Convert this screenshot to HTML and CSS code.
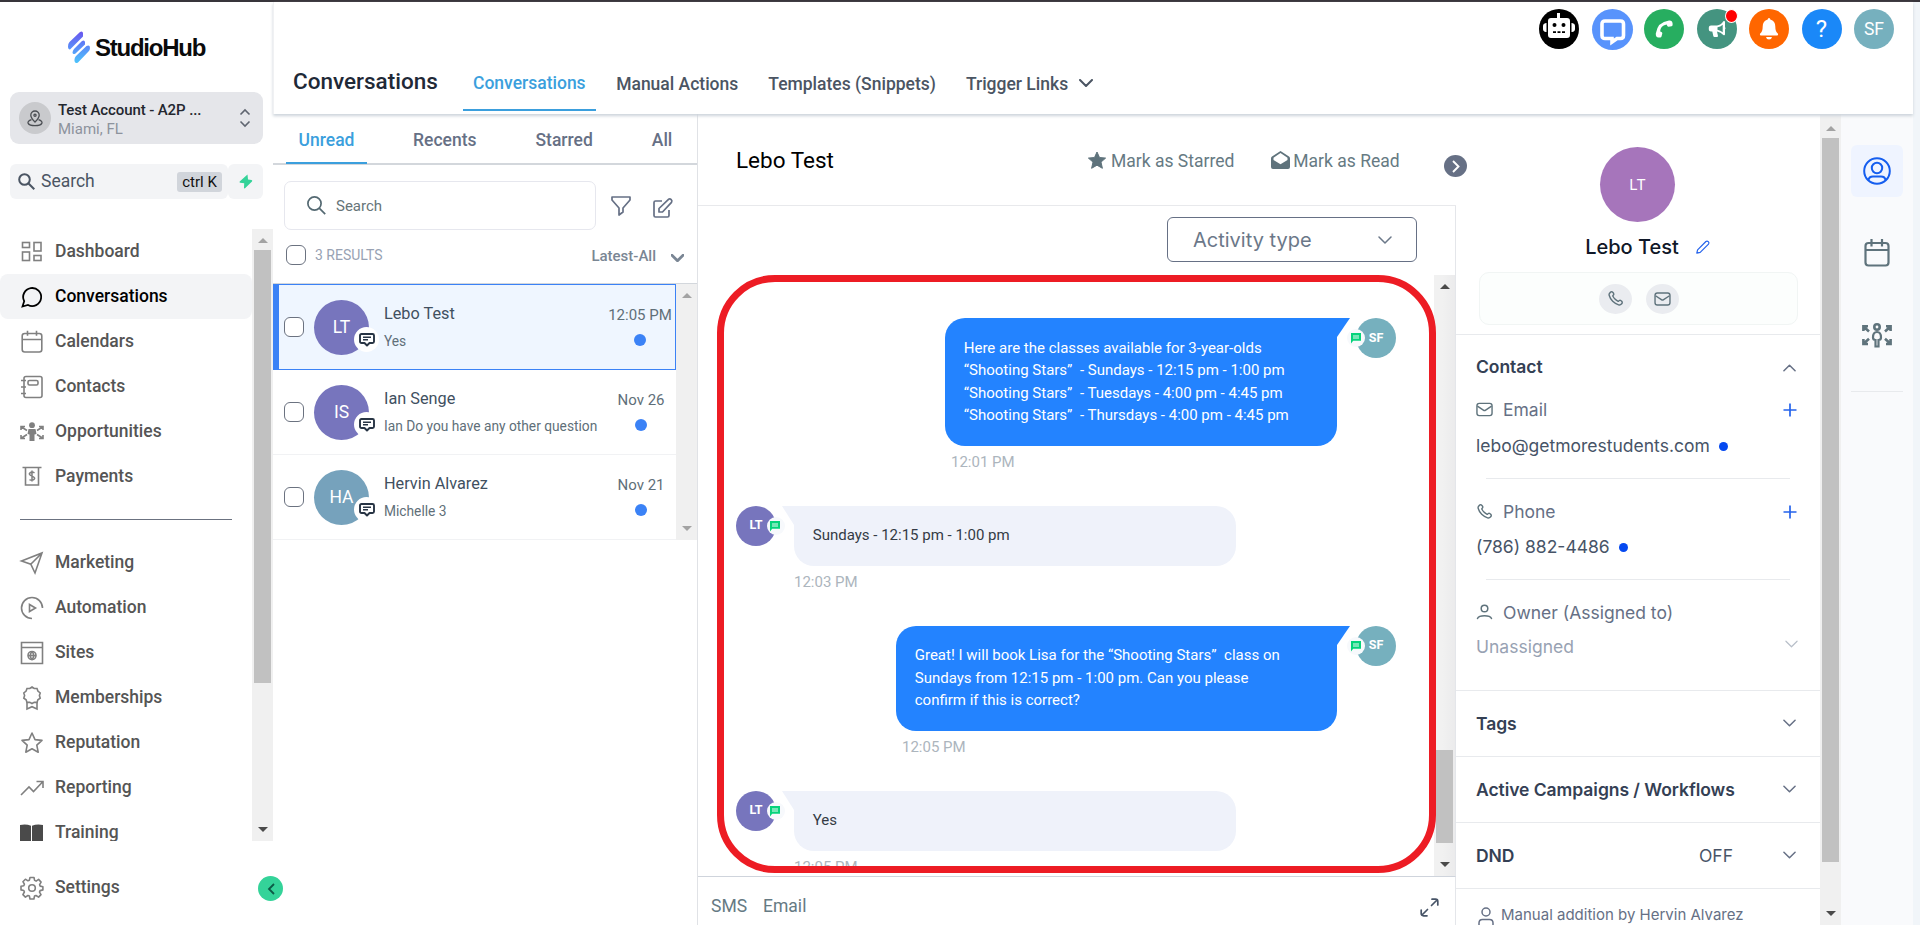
FILE: index.html
```html
<!DOCTYPE html>
<html lang="en">
<head>
<meta charset="utf-8">
<title>StudioHub - Conversations</title>
<link rel="stylesheet" href="styles.css">
</head>
<body>
<svg class="defs" width="0" height="0">
  <symbol id="chev-down" viewBox="0 0 14 8"><path d="M1 1l6 6 6-6" fill="none" stroke="currentColor" stroke-linecap="round" stroke-linejoin="round"/></symbol>
  <symbol id="mail" viewBox="0 0 18 15"><rect x="1" y="1" width="16" height="13" rx="2.5" fill="none" stroke="currentColor" stroke-width="1.5"/><path d="M1.5 4l6.3 4.2q1.2.8 2.4 0L16.500 4" fill="none" stroke="currentColor" stroke-width="1.500"/></symbol>
  <symbol id="phone" viewBox="0 0 24 24"><path d="M8.380 8.853a14.600 14.600 0 0 0 2.847 4.010 14.600 14.600 0 0 0 4.010 2.847c.124.060.187.090.265.112.280.082.625.023.862-.147.067-.048.124-.105.239-.219.350-.350.524-.524.700-.639a2 2 0 0 1 2.180 0c.176.115.351.290.700.640l.196.194c.532.531.797.797.942 1.082a2 2 0 0 1 0 1.806c-.145.285-.410.551-.942 1.082l-.157.158c-.530.530-.795.794-1.155.997-.400.224-1.020.386-1.478.384-.413-.001-.695-.081-1.260-.241a19.038 19.038 0 0 1-8.283-4.874A19.039 19.039 0 0 1 3.170 7.761c-.160-.564-.240-.846-.241-1.260a3.377 3.377 0 0 1 .384-1.477c.202-.360.467-.625.997-1.155l.157-.158c.532-.531.798-.797 1.083-.941a2 2 0 0 1 1.805 0c.286.144.551.410 1.083.942l.195.194c.350.350.524.525.638.700a2 2 0 0 1 0 2.181c-.114.176-.289.350-.638.700-.115.114-.172.172-.220.238-.170.238-.228.582-.147.862.023.078.053.140.113.266z" fill="none" stroke="currentColor" stroke-width="2"/></symbol>
  <symbol id="user" viewBox="0 0 16 16"><circle cx="8" cy="4.500" r="3.300" fill="none" stroke="currentColor" stroke-width="1.500"/><path d="M1 14.500c1.600-3.700 12.400-3.700 14 0" fill="none" stroke="currentColor" stroke-width="1.500" stroke-linecap="round"/></symbol>
  <symbol id="calendar" viewBox="0 0 22 24"><rect x="1.200" y="3.500" width="19.600" height="18.500" rx="2.500" fill="none" stroke="currentColor" stroke-width="1.600"/><path d="M1.200 9.500h19.600M6.500.800v5M15.500.800v5" fill="none" stroke="currentColor" stroke-width="1.600"/></symbol>
  <symbol id="comment" viewBox="0 0 16 14"><path d="M2.500 1h11Q15 1 15 2.500v6q0 1.500-1.500 1.500H10.500L8 12.500 5.500 10h-3Q1 10 1 8.500v-6Q1 1 2.500 1z" fill="#fff" stroke="#273444" stroke-width="1.900" stroke-linejoin="round"/><path d="M4 4.200h8M4 6.800h5" stroke="#273444" stroke-width="1.400"/></symbol>
  <symbol id="sms" viewBox="0 0 12 12"><path d="M1 1h10v7.800H3.200L1 11.400z" fill="#06d37c"/><path d="M3 4h6M3 6h6" stroke="#fff" stroke-width=".900"/></symbol>
  <symbol id="plus" viewBox="0 0 14 14"><path d="M7 .500v13M.500 7h13" stroke="currentColor" stroke-width="1.700"/></symbol>
</svg>
<div class="window-edge"></div>
<div class="app">
  <aside class="sidebar">
    <div class="logo">
      <svg width="24" height="33" viewBox="0 0 24 33"><defs><linearGradient id="lg" x1="0" y1="0" x2="0" y2="1" gradientUnits="objectBoundingBox"><stop offset="0" stop-color="#6a55ee"/><stop offset=".5" stop-color="#5a8cf8"/><stop offset="1" stop-color="#4cc4fb"/></linearGradient></defs>
      <path d="M1 15.500Q.800 13 2.500 11L13 1Q15.500-.500 16 2v3.500L3 18.500Q1 18.500 1 15.500zM5.500 21.500q.200-2 1.500-3.500L15 10q2.500-1.500 3 1v2.500L8.500 22.500Q5.800 24 5.500 21.500zM7.500 28.500q0-2 1.500-3.500L19.500 15q3.500-1.500 3.500 2 0 2-1.500 3.500L11 31.500Q8 33 7.500 30z" fill="url(#lg)"/></svg>
      <span>StudioHub</span>
    </div>
    <div class="account">
      <div class="pin"><svg width="16" height="17" viewBox="0 0 16 17" fill="none" stroke="#4a4d52" stroke-width="1.300"><path d="M8 12C5 9 3.800 7.300 3.800 5.200a4.200 4.200 0 0 1 8.400 0C12.200 7.300 11 9 8 12z"/><circle cx="8" cy="5.200" r="1.100"/><path d="M4.500 9.700C-1.500 11.500.500 15.600 8 15.600s9.500-4.100 3.500-5.900"/></svg></div>
      <div class="account-text"><b>Test Account - A2P ...</b><span>Miami, FL</span></div>
      <svg width="12" height="18" viewBox="0 0 12 18" fill="none" stroke="#5f6570" stroke-width="1.600"><path d="M1.500 5.500L6 1l4.500 4.500M1.500 12.500L6 17l4.500-4.500"/></svg>
    </div>
    <div class="side-search">
      <div class="side-input"><svg width="17" height="17" viewBox="0 0 17 17" fill="none" stroke="#4b5563" stroke-width="2"><circle cx="6.500" cy="6.500" r="5.300"/><path d="M10.300 10.300l6 6"/></svg><span>Search</span><kbd>ctrl K</kbd></div>
      <div class="bolt"><svg width="14" height="15" viewBox="0 0 14 15"><path d="M8.500.500L.700 7.500q-.700 1 .500 1.300l4 .400L5 14q.300.800 1 .300L13 7.500q.700-1-.500-1.400L9 5.600z" fill="#34d399"/></svg></div>
    </div>
    <div class="nav-wrap">
      <nav class="nav">
        <a><svg width="22" height="22" viewBox="0 0 22 22"><rect x="1.500" y="1.500" width="7" height="5"/><rect x="13" y="1.500" width="7" height="8.500"/><rect x="1.500" y="11" width="7" height="8.500"/><rect x="13" y="14.500" width="7" height="5"/></svg>Dashboard</a>
        <a class="on"><svg width="22" height="22" viewBox="0 0 22 22"><path d="M1.500 20.500l1.700-5.300A9 9 0 1 1 7 19z" stroke-width="1.800"/></svg>Conversations</a>
        <a><svg width="22" height="24"><use href="#calendar"/></svg>Calendars</a>
        <a><svg width="24" height="24" viewBox="0 0 24 24"><rect x="4" y="1.500" width="18" height="21" rx="2"/><rect x="8" y="5.500" width="10" height="4.500" rx="1.500"/><path d="M1 5.500h5M1 12h5M1 18.500h5"/></svg>Contacts</a>
        <a><svg width="24" height="20" viewBox="0 0 24 20"><circle cx="12" cy="3.200" r="2.900" fill="#808080" stroke="none"/><path d="M8.500 7h7l1 5-2 .500V19h-5v-6.500l-2-.500z" fill="#808080" stroke="none"/><path d="M7 8.500L1.500 5M1 8V4.500h4M17 8.500L22.500 5M19 4.500h4V8M7 12.500L1.500 16M1 13v3.500h4M17 12.500l5.500 3.500M19 16.500h4V13"/></svg>Opportunities</a>
        <a><svg width="20" height="21" viewBox="0 0 20 21"><path d="M.500 1.500h19M3.500 1.500v17.500h13V1.500"/><path d="M12.500 6.800q-2.500-1.600-4.500 0t2 3.300 2 3.300-4.500.2M10 4.500v11" stroke-width="1.500"/></svg>Payments</a>
        <hr>
        <a><svg width="24" height="24" viewBox="0 0 24 24"><path d="M1.500 10L22 2l-7 20-4.200-8.800zM11 13L22 2"/></svg>Marketing</a>
        <a><svg width="24" height="24" viewBox="0 0 24 24"><path d="M12 22.500A10.500 10.500 0 1 1 22.500 12"/><path d="M9.500 8.500v7l6-3.500z"/></svg>Automation</a>
        <a><svg width="24" height="24" viewBox="0 0 24 24"><path d="M1.500 1.500h21v21h-21zM1.500 6.500h21"/><circle cx="12" cy="14.500" r="4"/><path d="M8 14.500h8M12 10.500q-3.500 4 0 8 3.500-4 0-8"/></svg>Sites</a>
        <a><svg width="24" height="24" viewBox="0 0 24 24"><path d="M12 1l2.200 1.500 2.800 0 .9 2.600L20.200 7l-.8 2.600.8 2.600-2.300 1.600-.9 2.600-2.800 0L12 17.500l-2.200-1.100-2.800 0-.9-2.600L3.800 12.200l.8-2.600L3.800 7l2.300-1.900L7 2.500l2.800 0z"/><path d="M7 16v7l5-2.300 5 2.300v-7"/></svg>Memberships</a>
        <a><svg width="24" height="24" viewBox="0 0 24 24"><path d="M12 2l3 6.600 7 .8-5.200 4.800 1.400 7L12 17.800 5.800 21.200l1.400-7L2 9.400l7-.8z" stroke-linejoin="round"/></svg>Reputation</a>
        <a><svg width="24" height="16" viewBox="0 0 24 16"><path d="M1 15l8-8 4.500 4.500L22.500 2M16.500 1.500h6.500v6.500"/></svg>Reporting</a>
        <a><svg width="24" height="20" viewBox="0 0 24 20"><path d="M0 2q6-1.500 11 .8v17Q6 17 0 18.500zM23 2q-6-1.500-11 .8v17q5-2.800 11-1.300z" fill="#4a4a4a" stroke="none"/></svg>Training</a>
      </nav>
      <div class="sbar sbar-nav"><i class="up dim"></i><i class="thumb"></i><i class="down"></i></div>
    </div>
    <div class="settings"><svg width="24" height="24" viewBox="0 0 24 24"><path d="M10 1.500h4l.6 2.900 1.500.7L18.600 3.400l2.500 2.700-1.500 2.500.6 1.500 2.700.6v3.200l-2.800.7-.6 1.500 1.500 2.500-2.400 2.500-2.600-1.600-1.500.6-.6 2.900h-3.900l-.6-2.900-1.500-.6-2.500 1.600L2.900 18.600 4.400 16l-.6-1.500L1 13.900v-3.600l2.800-.6.6-1.500L2.900 5.700l2.500-2.500 2.500 1.600 1.500-.6z" stroke-linejoin="round"/><circle cx="12" cy="12" r="3.300"/></svg>Settings</div>
    <div class="collapse"><svg width="8" height="12" viewBox="0 0 8 12"><path d="M7 1L2 6l5 5" fill="none" stroke="#0c5a46" stroke-width="1.800"/></svg></div>
  </aside>

  <main class="main">
    <header class="header">
      <h1>Conversations</h1>
      <div class="tabs">
        <a class="on">Conversations</a><a>Manual Actions</a><a>Templates (Snippets)</a><a>Trigger Links <svg width="14" height="8" stroke-width="2"><use href="#chev-down"/></svg></a>
      </div>
      <div class="tools">
        <div class="tool bot"><svg width="32" height="28" viewBox="0 0 32 28"><path d="M14 0h3v5h7q3 0 3 3v14q0 3-3 3H8q-3 0-3-3V8q0-3 3-3h6z" fill="#fff"/><path d="M3.500 10v9H3q-3-.500-3-3v-3q0-2.500 3-3zM28.500 10v9h.5q3-.500 3-3v-3q0-2.500-3-3z" fill="#fff"/><circle cx="11.500" cy="12" r="2"/><circle cx="20.500" cy="12" r="2"/><path d="M10 19.200h3M14.500 19.200h3M19 19.200h3" stroke="#000" stroke-width="1.800"/></svg></div>
        <div class="tool chat"><svg width="26" height="26" viewBox="0 0 26 26"><path d="M5 2h15.500q3 0 3 3v11.500q0 3-3 3H17l-5 3.500v-3.500H5q-3 0-3-3V5q0-3 3-3z" fill="none" stroke="#fff" stroke-width="3.600"/></svg></div>
        <div class="tool call"><svg width="18" height="18" viewBox="0 0 18 18"><path d="M17.600 3.500V5q0 1-1 1.200l-3.100.5q-.8 0-1.300-.9l-.6-1.200C7 5.500 5.500 8 5.200 11.500l1.300.6q1 .5.800 1.500L6.500 16.500q-.3 1-1.300 1H3.500Q.6 17.300.8 13.500 2.500 2 14 .5q3.300-.3 3.600 3z" fill="#fff"/></svg></div>
        <div class="tool horn"><svg width="18" height="18" viewBox="0 0 18 18"><path d="M3 5.500h6Q13 5 15.300 1.300q1.700-1 1.700 1V7q1 1 0 2.500V14q0 2-1.700 1Q13 12 9 11.500l1 4.500q0 1-1 1H6.500q-1 0-1.200-1l-1-4.500H3Q.8 11.500.8 9.500v-2q0-2 2.200-2z" fill="#fff"/><path d="M9.500 7.200q3-.4 5.200-2.500v7.600q-2.200-2-5.200-2.500z" fill="#449480"/></svg><i class="alert"></i></div>
        <div class="tool bell"><svg width="20" height="22" viewBox="0 0 20 22"><path d="M10 0q1.300 0 1.300 1.600Q16.300 3 16.300 8.500q0 5.500 2.700 7.200.5 1.800-.8 1.800H1.800Q.5 17.500 1 15.700 3.700 14 3.700 8.500q0-5.500 5-6.900Q8.700 0 10 0zM7 19h6q-.5 2.500-3 2.500T7 19z" fill="#fff"/></svg></div>
        <div class="tool help">?</div>
        <div class="tool me">SF</div>
      </div>
    </header>

    <div class="body">
      <section class="list">
        <div class="list-tabs"><a class="on">Unread</a><a>Recents</a><a>Starred</a><a>All</a></div>
        <div class="list-search">
          <div class="box"><svg width="19" height="19" viewBox="0 0 19 19" fill="none" stroke="#546972" stroke-width="1.700"><circle cx="7.500" cy="7.500" r="6.600"/><path d="M12.200 12.200l6 6"/></svg>Search</div>
          <svg width="20" height="20" viewBox="0 0 20 20" fill="none" stroke="#667085" stroke-width="1.700" stroke-linejoin="round"><path d="M1 1h18v3l-7 8v4l-4 3v-7L1 4z"/></svg>
          <svg class="edit" width="20" height="20" viewBox="0 0 20 20" fill="none" stroke="#667085" stroke-width="1.700" stroke-linejoin="round"><path d="M9 3H2.500Q1 3 1 4.500v13Q1 19 2.500 19h12q1.500 0 1.500-1.500V12M6 14v-3.500L15.500 1.300q1.500-.8 2.700.4t.3 2.700L9.500 14z"/></svg>
        </div>
        <div class="list-sort"><i class="check"></i><span>3 RESULTS</span><b>Latest-All</b><svg width="13" height="8" stroke-width="3"><use href="#chev-down"/></svg></div>
        <div class="list-scroll">
          <div class="rows">
            <div class="row on"><i class="check"></i><div class="av">LT<em><svg width="16" height="14"><use href="#comment"/></svg></em></div><div class="rt"><b>Lebo Test</b><span>Yes</span></div><div class="rm"><time>12:05 PM</time><i></i></div></div>
            <div class="row"><i class="check"></i><div class="av">IS<em><svg width="16" height="14"><use href="#comment"/></svg></em></div><div class="rt"><b>Ian Senge</b><span>Ian Do you have any other question</span></div><div class="rm"><time>Nov 26</time><i></i></div></div>
            <div class="row"><i class="check"></i><div class="av teal">HA<em><svg width="16" height="14"><use href="#comment"/></svg></em></div><div class="rt"><b>Hervin Alvarez</b><span>Michelle 3</span></div><div class="rm"><time>Nov 21</time><i></i></div></div>
          </div>
          <div class="sbar"><i class="up dim"></i><i class="down dim"></i></div>
        </div>
      </section>

      <section class="chatcol">
        <div class="chat-head"><h2>Lebo Test</h2>
          <span class="act star"><svg width="18" height="17" viewBox="0 0 18 17"><path d="M9 0l2.500 5.500 6.100.6-4.600 4 1.400 6.200L9 13.200l-5.400 3.100L5 10.100l-4.600-4 6.100-.6z" fill="#5f737c" stroke="#5f737c" stroke-linejoin="round"/></svg>Mark as Starred</span>
          <span class="act read"><svg width="19" height="18" viewBox="0 0 19 18"><path d="M9.500 0L18 5.500Q19 6 19 7.500V16q0 2-2 2H2q-2 0-2-2V7.500Q0 6 1 5.500zM9.500 2L2.500 6.700v2.300l7 4.300 7-4.300V6.700z" fill="#5f737c" fill-rule="evenodd"/></svg>Mark as Read</span>
          <div class="toggle"><svg width="8" height="13" viewBox="0 0 8 13"><path d="M1 1l5.500 5.500L1 12" fill="none" stroke="#fff" stroke-width="1.900"/></svg></div>
        </div>
        <div class="chat-filter"><div class="select">Activity type<svg width="14" height="8" stroke-width="1.500"><use href="#chev-down"/></svg></div></div>
        <div class="chat-scroll">
          <div class="msgs">
            <div class="msg out first"><div><div class="bub">Here are the classes available for 3-year-olds<br>“Shooting Stars”&nbsp; - Sundays - 12:15 pm - 1:00 pm<br>“Shooting Stars”&nbsp; - Tuesdays - 4:00 pm - 4:45 pm<br>“Shooting Stars”&nbsp; - Thursdays - 4:00 pm - 4:45 pm</div><time>12:01 PM</time></div><div class="mav sf">SF<em><svg width="12" height="12"><use href="#sms"/></svg></em></div></div>
            <div class="msg in"><div class="mav">LT<em><svg width="12" height="12"><use href="#sms"/></svg></em></div><div><div class="bub">Sundays - 12:15 pm - 1:00 pm</div><time>12:03 PM</time></div></div>
            <div class="msg out"><div><div class="bub wide">Great! I will book Lisa for the “Shooting Stars”&nbsp; class on<br>Sundays from 12:15 pm - 1:00 pm. Can you please<br>confirm if this is correct?</div><time>12:05 PM</time></div><div class="mav sf">SF<em><svg width="12" height="12"><use href="#sms"/></svg></em></div></div>
            <div class="msg in"><div class="mav">LT<em><svg width="12" height="12"><use href="#sms"/></svg></em></div><div><div class="bub">Yes</div><time>12:05 PM</time></div></div>
          </div>
          <div class="sbar sbar-chat"><i class="up"></i><i class="thumb"></i><i class="down"></i></div>
          <div class="frame"></div>
        </div>
        <div class="composer"><span>SMS</span><span>Email</span><svg width="19" height="19" viewBox="0 0 19 19" fill="none" stroke="#475467" stroke-width="1.700" stroke-linecap="round"><path d="M12 1.200h3.500q2.300 0 2.300 2.300V7M17 2l-5.500 5.500M7 17.800H3.500q-2.300 0-2.300-2.300V12M2 17l5.500-5.500"/></svg></div>
      </section>

      <section class="info">
        <div class="profile">
          <div class="big">LT</div>
          <div class="pname">Lebo Test<svg width="14" height="14" viewBox="0 0 14 14" fill="none" stroke="#2563eb" stroke-width="1.200" stroke-linejoin="round"><path d="M.800 13.200l.8-3.400 8.300-8.300q1.200-1 2.400.2t.2 2.400L4.200 12.400z"/></svg></div>
          <div class="quick"><i><svg width="17" height="17"><use href="#phone"/></svg></i><i><svg width="17" height="14"><use href="#mail"/></svg></i></div>
        </div>
        <div class="contact">
          <div class="line head"><b>Contact</b><svg class="flip" width="13" height="8" stroke-width="1.600"><use href="#chev-down"/></svg></div>
          <div class="line label"><svg width="17" height="15"><use href="#mail"/></svg>Email<svg class="plus" width="14" height="14"><use href="#plus"/></svg></div>
          <div class="line val">lebo@getmorestudents.com<i></i></div>
          <hr>
          <div class="line label"><svg width="17" height="17"><use href="#phone"/></svg>Phone<svg class="plus" width="14" height="14"><use href="#plus"/></svg></div>
          <div class="line val tight">(786) 882-4486<i></i></div>
          <hr>
          <div class="line label"><svg width="17" height="16"><use href="#user"/></svg>Owner (Assigned to)</div>
          <div class="line val tight un">Unassigned<svg width="13" height="8" stroke-width="1.300"><use href="#chev-down"/></svg></div>
        </div>
        <div class="sec"><b>Tags</b><svg width="13" height="8" stroke-width="1.600"><use href="#chev-down"/></svg></div>
        <div class="sec"><b>Active Campaigns / Workflows</b><svg width="13" height="8" stroke-width="1.600"><use href="#chev-down"/></svg></div>
        <div class="sec"><b>DND</b><span>OFF</span><svg width="13" height="8" stroke-width="1.600"><use href="#chev-down"/></svg></div>
        <div class="manual"><svg width="16" height="18" viewBox="0 0 16 18" fill="none" stroke="#667085" stroke-width="1.500"><circle cx="8" cy="5" r="4"/><path d="M1 18v-2q0-3.500 3.500-3.500h7Q15 12.500 15 16v2"/></svg>Manual addition by Hervin Alvarez</div>
      </section>
      <div class="sbar sbar-info"><i class="up dim"></i><i class="thumb"></i><i class="down"></i></div>
      <aside class="rail">
        <div class="tile on"><svg width="28" height="28" viewBox="0 0 28 28" fill="none" stroke="#155eef" stroke-width="2"><circle cx="14" cy="14" r="12.800"/><circle cx="14" cy="11" r="5.200"/><path d="M5.500 23q.5-3.500 4.500-3.500h8q4 0 4.500 3.500"/></svg></div>
        <div class="tile"><svg width="26" height="28" viewBox="0 0 26 28" fill="none" stroke="#5f737c" stroke-width="2.200"><rect x="1.500" y="4" width="23" height="22.500" rx="3"/><path d="M1.500 11h23M7.500 0v7.500M18 0v7.500"/></svg></div>
        <div class="tile"><svg width="30" height="25" viewBox="0 0 30 25" fill="none" stroke="#5f737c" stroke-width="2.600"><circle cx="15" cy="4" r="2.700"/><path d="M13.500 23.500V17q-2.500 0-2.500-2.500 0-5.500 4-5.500t4 5.500q0 2.500-2.500 2.500v6.500z" stroke-width="2.200"/><path d="M1.400 8V3.300H6M1.500 3.500l5.500 5M28.600 8V3.300H24M28.500 3.500l-5.500 5M1.400 16v5H6M1.500 20.700l5.500-5M28.600 16v5H24M28.500 20.700l-5.500-5"/></svg></div>
        <hr>
      </aside>
    </div>
  </main>
</div>
</body>
</html>
```
FILE: styles.css
```css
* { box-sizing: border-box; }
body { margin: 0; height: 925px; overflow: hidden; background: #f1f5f9; font: 400 17.5px/22.5px Roboto, "Open Sans", sans-serif; color: #475467; }
h1, h2, hr { margin: 0; }
i, em { font-style: normal; display: block; }
svg { display: block; flex: none; overflow: visible; }
.defs { position: absolute; }
.window-edge { height: 2px; background: #38353b; }
.app { display: flex; height: 923px; }

/* sidebar */
.sidebar { position: relative; width: 273px; flex: none; background: #fff; display: flex; flex-direction: column; }
.logo { display: flex; align-items: center; gap: 4px; padding: 28px 0 0 67px; height: 62px; }
.logo span { font: 700 24px/33px "Liberation Sans", Arial, sans-serif; letter-spacing: -1.25px; color: #0b0b0b; }
.account { display: flex; align-items: center; margin: 28px 10px 0; height: 52px; padding: 0 12px 0 9px; border-radius: 9px; background: #e5e6ea; }
.pin { width: 32px; height: 32px; border-radius: 50%; background: #c9cacd; display: flex; align-items: center; justify-content: center; }
.account-text { flex: 1; padding: 3px 0 0 7px; display: flex; flex-direction: column; font-size: 15px; line-height: 19px; }
.account-text b { font-weight: 500; color: #23272f; letter-spacing: -0.1px; }
.account-text span { color: #8d939d; }
.side-search { display: flex; margin: 20px 10px 0; height: 35px; }
.side-input { width: 218px; display: flex; align-items: center; padding: 0 6px 0 8px; border-radius: 6px; background: #f3f4f6; color: #4b5563; }
.side-input span { flex: 1; padding-left: 6px; }
.side-input kbd { font: 400 15px/20px Roboto, sans-serif; color: #111; background: #d1d5db; border-radius: 3px; width: 45px; text-align: center; }
.bolt { width: 35px; border-radius: 6px; background: #f3f4f6; display: flex; align-items: center; justify-content: center; }
.nav-wrap { display: flex; margin-top: 30px; height: 612px; overflow: hidden; }
.nav { width: 252px; }
.nav a, .settings { height: 45px; display: flex; align-items: center; font-weight: 500; color: #555; border-radius: 8px; }
.nav a svg, .settings svg { margin: 0 11px 0 20px; width: 24px; fill: none; stroke: #808080; stroke-width: 1.600; color: #808080; }
.nav a svg:has(use) { padding: 0 1px; }
.nav a.on { background: #f3f4f6; color: #000; }
.nav a.on svg { stroke: #000; }
.nav hr { border: 0; height: 1px; width: 212px; background: #6b7280; margin: 20px 0 20px 20px; }
.settings { margin-top: 24px; }
.collapse { position: absolute; z-index: 5; left: 258px; top: 874px; width: 25px; height: 25px; border-radius: 50%; background: #34d399; display: flex; align-items: center; justify-content: center; }

/* drawn scrollbars */
.sbar { width: 21px; flex: none; background: #f0f0f0; display: flex; flex-direction: column; align-items: center; justify-content: space-between; padding: 9px 0; }
.sbar .up, .sbar .down { width: 0; height: 0; border: 5px solid transparent; }
.sbar .up { border-top: 0; border-bottom-color: #4a4a4a; }
.sbar .down { border-bottom: 0; border-top-color: #4a4a4a; }
.sbar .up.dim { border-bottom-color: #a3a3a3; }
.sbar .down.dim { border-top-color: #a3a3a3; }
.sbar .thumb { width: 17px; background: #c1c1c1; margin-bottom: auto; }
.sbar-nav .thumb { height: 433px; margin-top: 7px; }
.sbar-chat { background: linear-gradient(90deg, #f1f1f1 40%, #ebebec); }
.sbar-chat .thumb { height: 93px; margin-top: 461px; }
.sbar-info { padding-top: 12px; }
.sbar-info .thumb { height: 724px; margin-top: 7px; }

/* header */
.main { flex: 1; min-width: 0; display: flex; flex-direction: column; }
.header { position: relative; z-index: 2; height: 112px; width: 1640px; background: #fff; box-shadow: 0 2px 3px #ccd3da; display: flex; border-left: 1px solid #f0f1f3; }
.header h1 { font: 500 22.5px/30px Roboto, sans-serif; color: #1f2937; padding: 64px 0 0 19px; width: 189px; }
.tabs { display: flex; align-items: flex-start; padding-top: 65px; font-weight: 500; }
.tabs a { height: 44px; line-height: 34px; padding: 0 0 0 30px; display: flex; white-space: nowrap; align-items: flex-start; color: #4b5563; }
.tabs a svg { margin: 12px 0 0 11px; }
.tabs a.on { padding: 0 10px; line-height: 32px; color: #3b9fdd; border-bottom: 2px solid #3b9fdd; }
.tabs a:nth-child(2) { padding-left: 20.5px; }
.tools { margin-left: auto; display: flex; gap: 12.500px; padding: 7px 19px 0 0; }
.tool { position: relative; width: 40px; height: 40px; border-radius: 50%; display: flex; align-items: center; justify-content: center; color: #fff; }
.bot { background: #000; } .bot svg { margin-top: -4px; }
.chat { background: #5893fc; width: 41px; height: 41px; margin-right: -1px; } .chat svg { margin: 4px 0 0 1px; }
.call { background: #27ae60; }
.horn { background: #449480; }
.bell { background: #ff6600; }
.help { background: #1a88f8; font-size: 24px; }
.me { background: #76b0be; }
.alert { position: absolute; left: 28px; top: 0; width: 13px; height: 14px; border-radius: 50%; background: #f00; border: 1px solid #fff; }

/* conversation list */
.body { display: flex; flex: 1; min-height: 0; }
.list { width: 425px; flex: none; background: #fff; border-right: 1px solid #e0e2e6; }
.list-tabs { display: flex; height: 51px; border-bottom: 2px solid #d3d7dc; padding-left: 13px; font-weight: 500; color: #667085; line-height: 53px; }
.list-tabs a { flex: none; height: 50px; margin-right: 59px; }
.list-tabs a.on { width: 81px; margin-right: 46px; text-align: center; color: #3b9fdd; border-bottom: 2px solid #3b9fdd; }
.list-tabs a:last-child { margin: 0; }
.list-search { display: flex; align-items: center; margin: 16px 0 0 11px; height: 49px; }
.list-search .box { width: 312px; height: 49px; border: 1.500px solid #e6e7ee; border-radius: 7px; display: flex; align-items: center; gap: 10px; padding: 2px 0 0 22px; font-size: 15px; color: #667478; margin-right: 15px; }
.list-search .box svg { margin-top: -3px; }
.list-search .edit { margin-left: 22px; margin-top: 4px; }
.check { width: 20px; height: 20px; border: 1px solid #6b7280; border-radius: 6px; background: #fff; flex: none; }
.list-sort { display: flex; align-items: center; height: 54px; padding: 0 13px 4px 13px; font-size: 14px; color: #98a2b3; border-bottom: 1px solid #d3d7dc; }
.list-sort span { padding: 1px 0 0 9px; flex: 1; }
.list-sort b { font-size: 15px; font-weight: 500; color: #7a8694; margin: 4px 15px 0 0; }
.list-sort svg { color: #7a8694; margin-top: 6px; }
.list-scroll { display: flex; height: 256px; }
.rows { width: 403px; }
.row { height: 85px; display: flex; align-items: center; padding-left: 11px; border-bottom: 1px solid #f1f2f4; }
.row.on { height: 86px; background: #eff6ff; border: 1px solid #3b82f6; border-left-width: 6px; padding-left: 5px; }
.av { position: relative; width: 55px; height: 55px; margin-left: 10px; border-radius: 50%; background: #7775bd; color: #fff; display: flex; align-items: center; justify-content: center; font-size: 17.500px; }
.av.teal { background: #76a2bc; }
.av em { position: absolute; right: -10px; top: 27px; width: 25px; height: 25px; border-radius: 50%; background: #fff; padding: 6px 0 0 4.500px; }
.rt { flex: 1; padding: 1px 0 0 15px; display: flex; flex-direction: column; gap: 5px; white-space: nowrap; font-size: 13.75px; color: #5f6f79; }
.rt b { font-weight: 400; font-size: 16.25px; color: #41505f; }
.rm { width: 68px; display: flex; flex-direction: column; align-items: center; font-size: 15px; color: #5f6f79; gap: 8px; margin-right: 1px; padding-bottom: 4px; }
.row:not(.on) .rm { margin: 0 0 0 -1px; padding-right: 2px; }
.rm i { width: 12px; height: 12px; border-radius: 50%; background: #3b82f6; }

/* chat */
.chatcol { width: 758px; flex: none; background: #fff; display: flex; flex-direction: column; }
.chat-head { position: relative; height: 92px; border-bottom: 1px solid #e8e9ec; display: flex; padding: 35px 0 0 38px; }
.chat-head h2 { font: 400 22.500px/22px Roboto, sans-serif; color: #000; width: 352px; }
.act { display: flex; align-items: flex-start; color: #667a83; line-height: 25px; }
.act svg { margin-top: 3px; margin-right: 5px; }
.act.read { width: 132px; margin-left: 37px; }
.act.read svg { margin: 2px 3px 0 0; }
.toggle { position: absolute; z-index: 3; left: 746px; top: 41px; width: 23px; height: 22px; border-radius: 50%; background: #667085; display: flex; align-items: center; justify-content: center; }
.chat-filter { height: 69px; padding: 11px 38px 0; display: flex; justify-content: flex-end; border-right: 1px solid #e4e6ea; }
.select { width: 250px; height: 45px; border: 1px solid #667085; border-radius: 6px; display: flex; align-items: center; justify-content: space-between; padding: 0 24px 0 25px; font: 400 20px/30px Inter, sans-serif; color: #6b7889; }
.chat-scroll { position: relative; height: 601px; display: flex; border-right: 1px solid #e4e6ea; border-left: 0; }
.msgs { flex: 1; overflow: hidden; height: 591px; font-size: 15px; padding: 43px 38px 0; }
.msg { display: flex; margin-bottom: 32px; }
.msg.out { justify-content: flex-end; color: #fff; gap: 19px; }
.msg.in { color: #343b45; gap: 18px; margin-bottom: 32px; }
.bub { position: relative; padding: 18.750px; border-radius: 20px 0 20px 20px; background: #2383ff; width: 392px; white-space: nowrap; }
.bub.wide { width: 441px; }
.in .bub { background: #eff2fa; border-radius: 0 20px 20px 20px; width: 442px; }
.bub::after { content: ""; position: absolute; top: 0; left: 100%; border: solid transparent; border-width: 0 13px 19px 0; border-top: 19px solid #2383ff; border-bottom: 0; }
.in .bub::after { left: auto; right: 100%; border-width: 19px 0 0 12px; border-top-color: #eff2fa; }
.msg time { display: block; padding: 5.500px 0 0 6px; color: #acb5bd; }
.msg.in time { padding-left: 0; }
.mav { position: relative; width: 40px; height: 40px; border-radius: 50%; background: #7775bd; color: #fff; font-size: 12.500px; font-weight: 700; display: flex; align-items: center; justify-content: center; flex: none; }
.mav.sf { background: #76b0be; }
.mav em { position: absolute; left: 31px; top: 11px; width: 18px; height: 18px; border-radius: 50%; background: #f7f9fc; padding: 3px 0 0 2px; }
.mav.sf em { left: -9px; padding-left: 3px; }
.frame { position: absolute; left: 19px; top: 0; width: 719px; height: 598px; border: 7px solid #ed1c24; border-radius: 58px; pointer-events: none; }
.composer { flex: 1; border-top: 1px solid #cfd4dc; border-right: 1px solid #e4e6ea; display: flex; gap: 16px; padding: 18px 16px 0 13px; color: #667a83; }
.composer svg { margin: 3px 0 0 auto; }

/* contact panel */
.info { width: 364px; flex: none; background: #fff; font-family: Inter, sans-serif; overflow: hidden; letter-spacing: 0; }
.profile { height: 221px; border-bottom: 1px solid #e8eaed; padding: 33px 22px 0 23px; display: flex; flex-direction: column; align-items: center; }
.big { width: 75px; height: 75px; border-radius: 50%; background: #a675bb; color: #fff; font: 400 15px/75px Inter, sans-serif; text-align: center; margin-right: 2px; }
.pname { display: flex; align-items: center; height: 50px; font-size: 20px; font-weight: 500; color: #101828; gap: 17px; padding-left: 18px; }
.quick { width: 319px; height: 53px; border: 1px solid #f1f5f4; border-radius: 10px; background: #fcfefd; display: flex; justify-content: center; align-items: center; gap: 14px; color: #5f737c; }
.quick i { width: 33px; height: 30px; border-radius: 50%; background: #eaecf0; display: flex; align-items: center; justify-content: center; }
.contact { height: 356px; border-bottom: 1px solid #e8eaed; padding: 15px 20px 0; color: #667085; }
.line { display: flex; align-items: center; height: 34px; }
.head { justify-content: space-between; padding: 1px 4px 0 0; }
.flip { transform: rotate(180deg); }
.info b { color: #344054; font-weight: 600; letter-spacing: -0.05px; }
.label { height: 34px; margin-top: 9px; }
.label svg:first-child { margin-right: 10px; margin-top: -2px; color: #5f737c; }
.label .plus { margin: 0 3px 0 auto; color: #2563eb; }
.val { height: 34px; margin-top: 2px; color: #475467; }
.val.tight { margin-top: 1px; }
.val i { width: 9px; height: 9px; border-radius: 50%; background: #0549f0; margin-left: 9.5px; }
.contact hr { border: 0; height: 1px; background: #e8eaed; margin: 15px 10px 0; }
.contact hr + .label { margin-top: 16px; }
.contact .un { color: #98a2b3; justify-content: space-between; margin-top: 0; }
.un svg { margin-right: 2px; margin-top: -6px; color: #b8bfc9; }
.sec { height: 66px; border-bottom: 1px solid #e8eaed; display: flex; align-items: center; padding: 1px 24px 0 20px; color: #667085; }
.sec svg { margin-top: -2px; }
.sec b { flex: 1; }
.sec span { color: #475467; margin-right: 50px; }
.manual { display: flex; align-items: flex-start; gap: 7px; padding: 15px 0 0 22px; font-size: 15px; color: #667085; white-space: nowrap; }
.manual svg { margin-top: 3px; }
.rail { width: 72px; flex: none; background: #f9fafc; padding: 31px 10px 0; }
.tile { height: 52px; border-radius: 6px; display: flex; align-items: center; justify-content: center; margin-bottom: 30px; }
.tile.on { background: #eff4ff; }
.rail hr { border: 0; height: 1px; background: #e8eaed; }
```
